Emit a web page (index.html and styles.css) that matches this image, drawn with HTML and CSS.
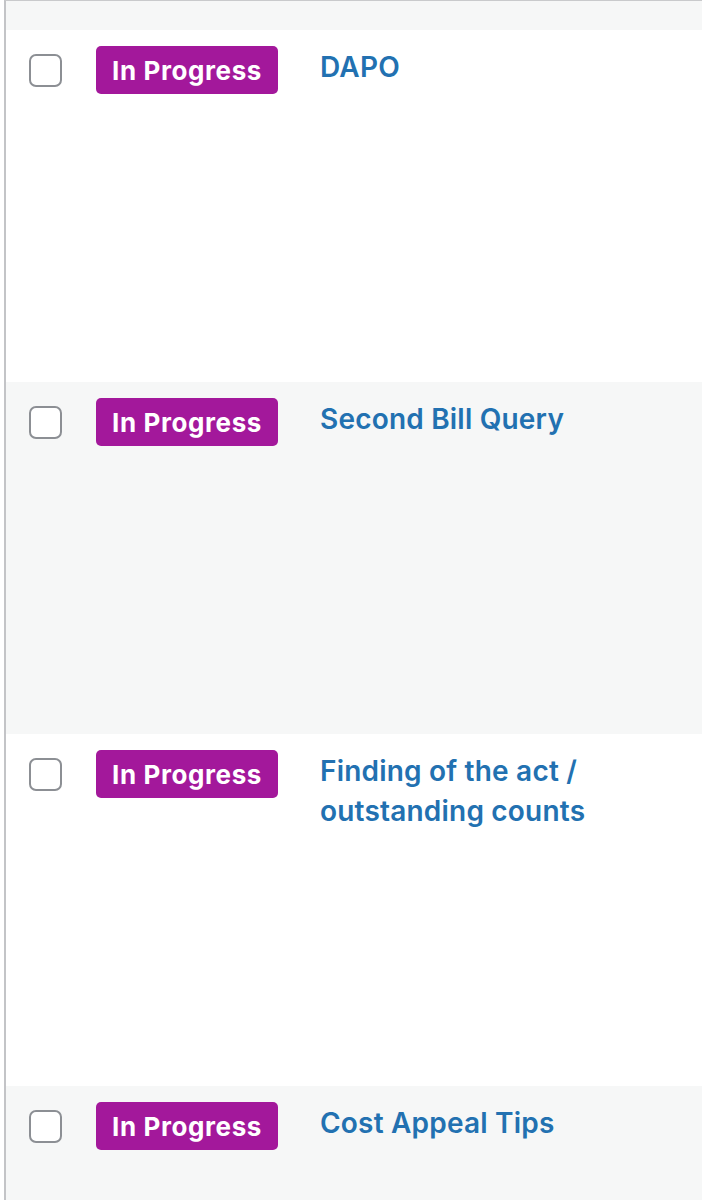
FILE: index.html
```html
<!DOCTYPE html>
<html>
<head>
<meta charset="utf-8">
<link rel="stylesheet" href="styles.css">
</head>
<body>
<div class="table">
  <div class="row alt top"></div>
  <div class="row">
    <span class="check"></span>
    <span class="badge">In Progress</span>
    <a class="title">DAPO</a>
  </div>
  <div class="row alt">
    <span class="check"></span>
    <span class="badge">In Progress</span>
    <a class="title">Second Bill Query</a>
  </div>
  <div class="row">
    <span class="check"></span>
    <span class="badge">In Progress</span>
    <a class="title">Finding of the act /<br>outstanding counts</a>
  </div>
  <div class="row alt">
    <span class="check"></span>
    <span class="badge">In Progress</span>
    <a class="title">Cost Appeal Tips</a>
  </div>
</div>
</body>
</html>
```
FILE: styles.css
```css
html, body {
  margin: 0;
  padding: 0;
  background: #ffffff;
}
body {
  font-family: Inter, Roboto, "Liberation Sans", sans-serif;
  overflow: hidden;
  height: 1200px;
}
.table {
  margin-left: 4px;
  border-left: 2px solid #c3c4c7;
  border-top: 1px solid #c9cacc;
  height: 1199px;
  overflow: hidden;
}
.row {
  height: 352px;
  box-sizing: border-box;
  display: flex;
  align-items: flex-start;
  padding: 16px 0 0 23px;
  background: #ffffff;
}
.row.alt {
  background: #f6f7f7;
}
.row.top {
  height: 29px;
  padding: 0;
}
.check {
  flex: none;
  width: 33px;
  height: 33px;
  box-sizing: border-box;
  border: 2px solid #8c8f94;
  border-radius: 7px;
  background: #fff;
  margin-top: 8px;
}
.badge {
  flex: none;
  margin-left: 34px;
  width: 182px;
  height: 48px;
  box-sizing: border-box;
  background: #a3189b;
  color: #fff;
  border-radius: 5px;
  font-weight: 700;
  font-size: 26px;
  line-height: 49px;
  padding-left: 16px;
  letter-spacing: 0.6px;
}
.title {
  margin-left: 42px;
  color: #2271b1;
  font-weight: 600;
  font-size: 28px;
  line-height: 40px;
  margin-top: 1px;
  letter-spacing: 0.2px;
}
```
